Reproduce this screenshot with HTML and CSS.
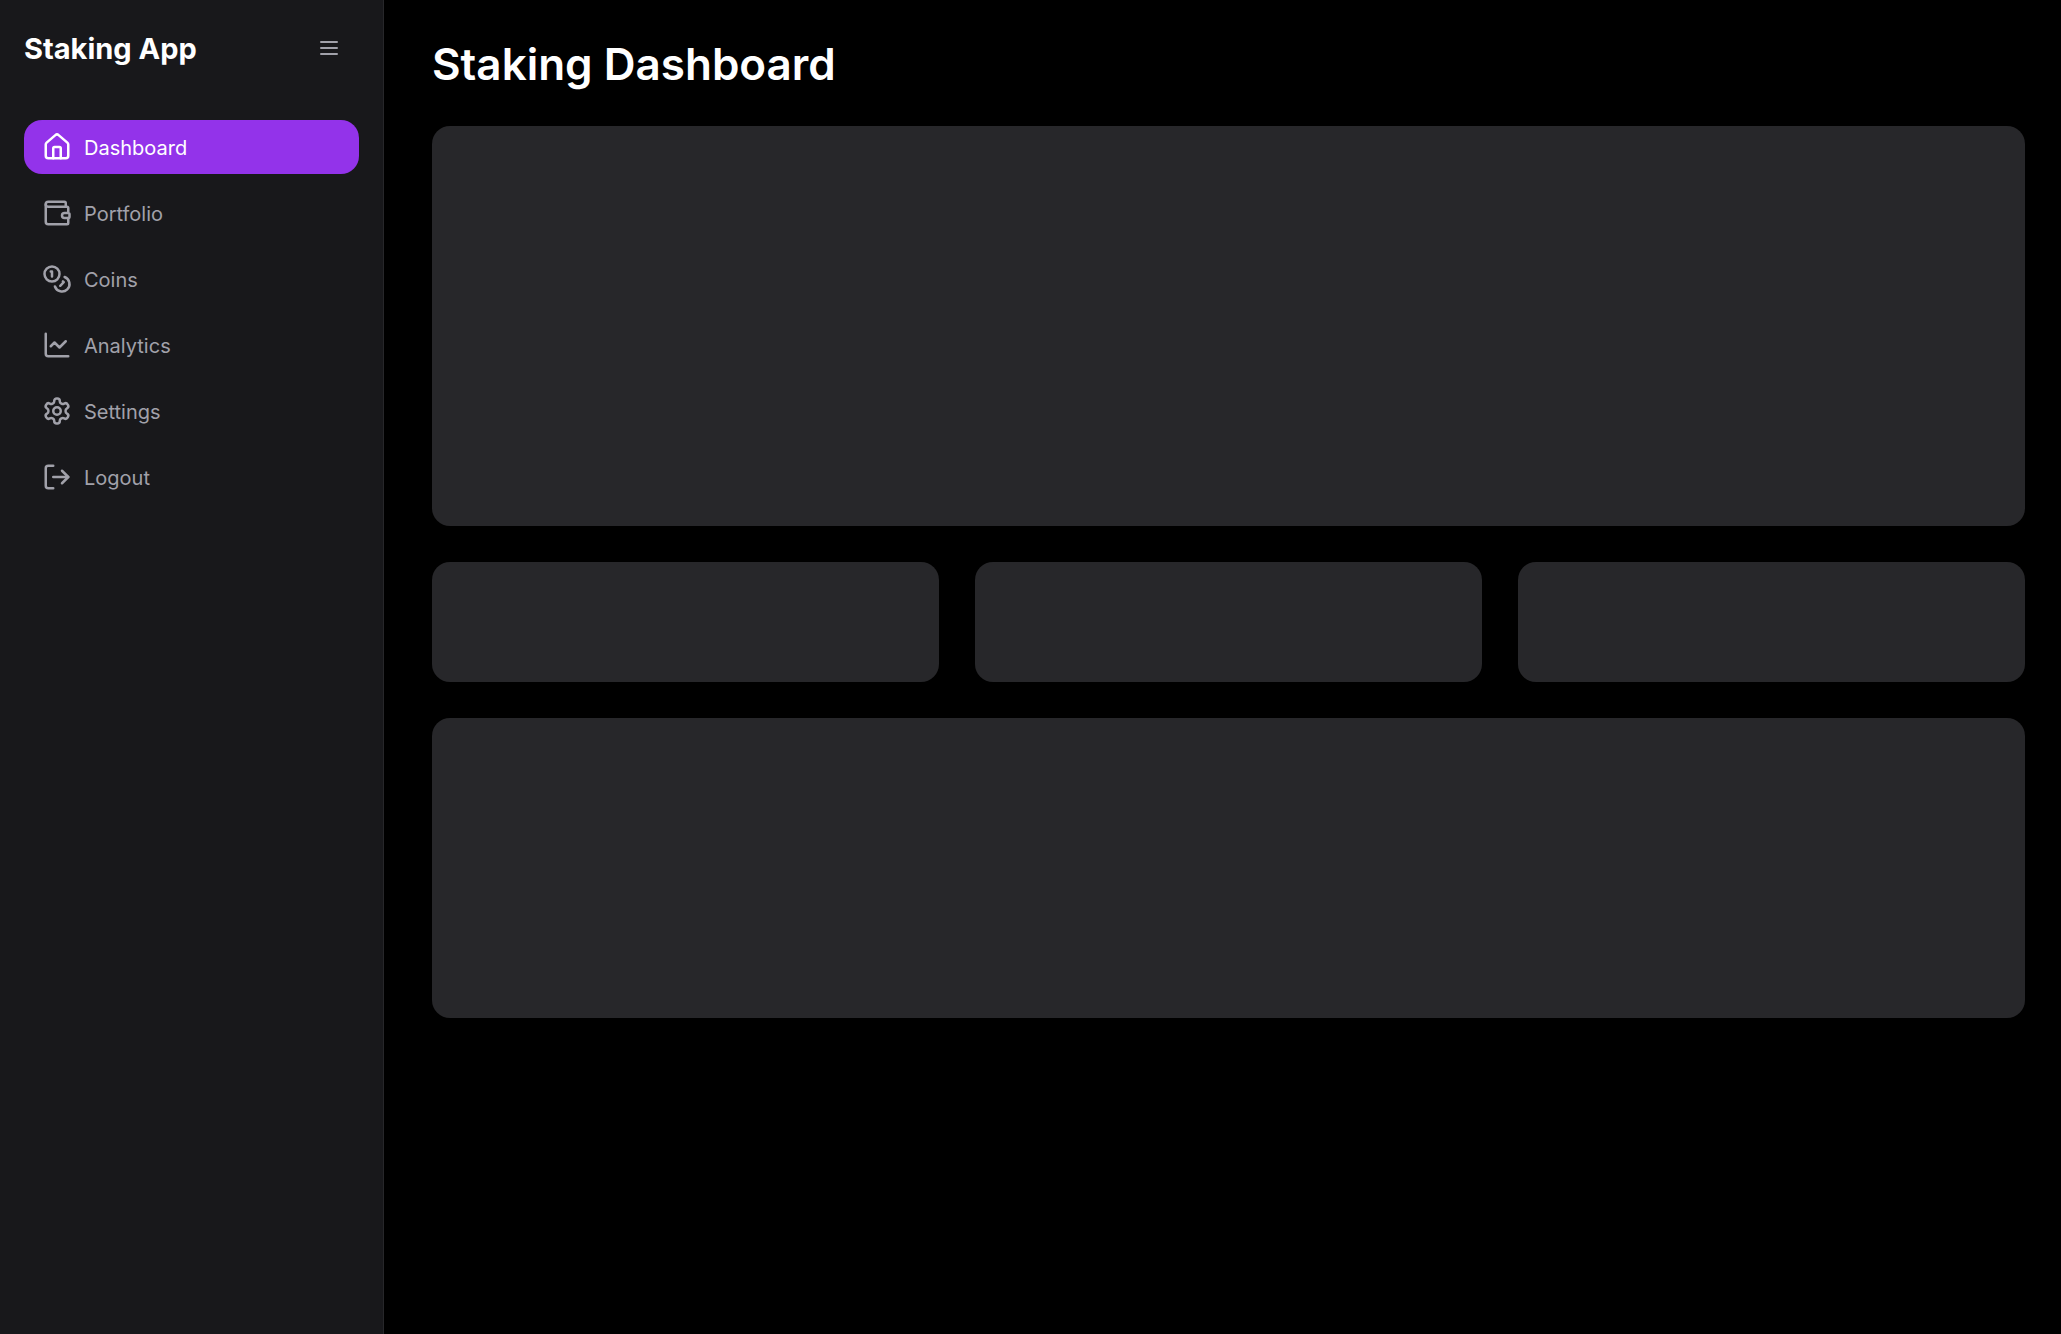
FILE: index.html
```html
<!DOCTYPE html>
<html lang="en">
<head>
  <meta charset="utf-8">
  <meta name="viewport" content="width=device-width, initial-scale=1">
  <title>Staking Dashboard</title>
  <link rel="stylesheet" href="styles.css">
</head>
<body class="app">
  <aside class="sidebar">
    <header class="sidebar-header">
      <h2 class="brand">Staking App</h2>
      <button class="menu-toggle" type="button" aria-label="Toggle menu">
        <svg class="icon-small" viewBox="0 0 24 24" aria-hidden="true"><path d="M4 6h16M4 12h16M4 18h16"/></svg>
      </button>
    </header>
    <nav class="nav">
      <a class="nav-item active" href="#dashboard" aria-current="page">
        <svg class="icon" viewBox="0 0 24 24" aria-hidden="true"><path d="M15 21v-8a1 1 0 0 0-1-1h-4a1 1 0 0 0-1 1v8"/><path d="M3 10a2 2 0 0 1 .709-1.528l7-5.999a2 2 0 0 1 2.582 0l7 5.999A2 2 0 0 1 21 10v9a2 2 0 0 1-2 2H5a2 2 0 0 1-2-2z"/></svg>
        <span class="nav-label">Dashboard</span>
      </a>
      <a class="nav-item" href="#portfolio">
        <svg class="icon" viewBox="0 0 24 24" aria-hidden="true"><path d="M19 7V4a1 1 0 0 0-1-1H5a2 2 0 0 0 0 4h15a1 1 0 0 1 1 1v4h-3a2 2 0 0 0 0 4h3a1 1 0 0 0 1-1v-2a1 1 0 0 0-1-1"/><path d="M3 5v14a2 2 0 0 0 2 2h15a1 1 0 0 0 1-1v-4"/></svg>
        <span class="nav-label">Portfolio</span>
      </a>
      <a class="nav-item" href="#coins">
        <svg class="icon" viewBox="0 0 24 24" aria-hidden="true"><circle cx="8" cy="8" r="6"/><path d="M18.09 10.37A6 6 0 1 1 10.34 18"/><path d="M7 6h1v4"/><path d="m16.71 13.88.7.71-2.82 2.82"/></svg>
        <span class="nav-label">Coins</span>
      </a>
      <a class="nav-item" href="#analytics">
        <svg class="icon" viewBox="0 0 24 24" aria-hidden="true"><path d="M3 3v16a2 2 0 0 0 2 2h16"/><path d="m19 9-5 5-4-4-3 3"/></svg>
        <span class="nav-label">Analytics</span>
      </a>
      <a class="nav-item" href="#settings">
        <svg class="icon" viewBox="0 0 24 24" aria-hidden="true"><path d="M12.22 2h-.44a2 2 0 0 0-2 2v.18a2 2 0 0 1-1 1.73l-.43.25a2 2 0 0 1-2 0l-.15-.08a2 2 0 0 0-2.73.73l-.22.38a2 2 0 0 0 .73 2.73l.15.1a2 2 0 0 1 1 1.72v.51a2 2 0 0 1-1 1.74l-.15.09a2 2 0 0 0-.73 2.73l.22.38a2 2 0 0 0 2.73.73l.15-.08a2 2 0 0 1 2 0l.43.25a2 2 0 0 1 1 1.73V20a2 2 0 0 0 2 2h.44a2 2 0 0 0 2-2v-.18a2 2 0 0 1 1-1.73l.43-.25a2 2 0 0 1 2 0l.15.08a2 2 0 0 0 2.73-.73l.22-.39a2 2 0 0 0-.73-2.73l-.15-.08a2 2 0 0 1-1-1.74v-.5a2 2 0 0 1 1-1.74l.15-.09a2 2 0 0 0 .73-2.73l-.22-.38a2 2 0 0 0-2.73-.73l-.15.08a2 2 0 0 1-2 0l-.43-.25a2 2 0 0 1-1-1.73V4a2 2 0 0 0-2-2z"/><circle cx="12" cy="12" r="3"/></svg>
        <span class="nav-label">Settings</span>
      </a>
      <a class="nav-item" href="#logout">
        <svg class="icon" viewBox="0 0 24 24" aria-hidden="true"><path d="M9 21H5a2 2 0 0 1-2-2V5a2 2 0 0 1 2-2h4"/><path d="m16 17 5-5-5-5"/><path d="M21 12H9"/></svg>
        <span class="nav-label">Logout</span>
      </a>
    </nav>
  </aside>
  <main class="main">
    <h1 class="page-title">Staking Dashboard</h1>
    <section class="card card-large"></section>
    <div class="card-row">
      <section class="card card-small"></section>
      <section class="card card-small"></section>
      <section class="card card-small"></section>
    </div>
    <section class="card card-medium"></section>
  </main>
</body>
</html>
```
FILE: styles.css
```css
* {
  box-sizing: border-box;
}

.app {
  display: flex;
  min-height: 100vh;
  margin: 0;
  background: #000;
  color: #fff;
  font-family: Inter, "Liberation Sans", sans-serif;
}

.sidebar {
  flex: 0 0 384px;
  padding: 24px;
  background: #18181b;
  border-right: 1px solid #27272a;
}

.sidebar-header {
  display: flex;
  align-items: center;
  justify-content: space-between;
  margin-bottom: 48px;
}

.brand {
  margin: 0;
  padding-top: 2px;
  font-size: 29px;
  line-height: 46px;
  font-weight: 700;
}

.menu-toggle {
  display: flex;
  align-items: center;
  justify-content: center;
  width: 60px;
  height: 48px;
  padding: 0;
  border: 0;
  background: transparent;
  color: #a1a1aa;
}

.icon,
.icon-small {
  flex: none;
  width: 30px;
  height: 30px;
  fill: none;
  stroke: currentColor;
  stroke-width: 2;
  stroke-linecap: round;
  stroke-linejoin: round;
}

.icon-small {
  width: 24px;
  height: 24px;
}

.nav {
  display: flex;
  flex-direction: column;
  gap: 12px;
}

.nav-item {
  display: flex;
  align-items: center;
  gap: 12px;
  padding: 12px 18px;
  border-radius: 18px;
  color: #a1a1aa;
  font-size: 20px;
  line-height: 28px;
  text-decoration: none;
}

.nav-item.active {
  background: #9333ea;
  color: #fff;
}

.nav-label {
  padding-top: 2px;
}

.main {
  flex: 1;
  display: flex;
  flex-direction: column;
  gap: 36px;
  min-width: 0;
  padding: 38px 36px 36px 48px;
}

.page-title {
  margin: 0;
  font-size: 44px;
  line-height: 52px;
  font-weight: 600;
}

.card {
  border-radius: 18px;
  background: #27272a;
}

.card-large {
  min-height: 400px;
}

.card-medium {
  min-height: 300px;
}

.card-small {
  min-height: 120px;
}

.card-row {
  display: grid;
  grid-template-columns: repeat(3, 1fr);
  gap: 36px;
}
```
